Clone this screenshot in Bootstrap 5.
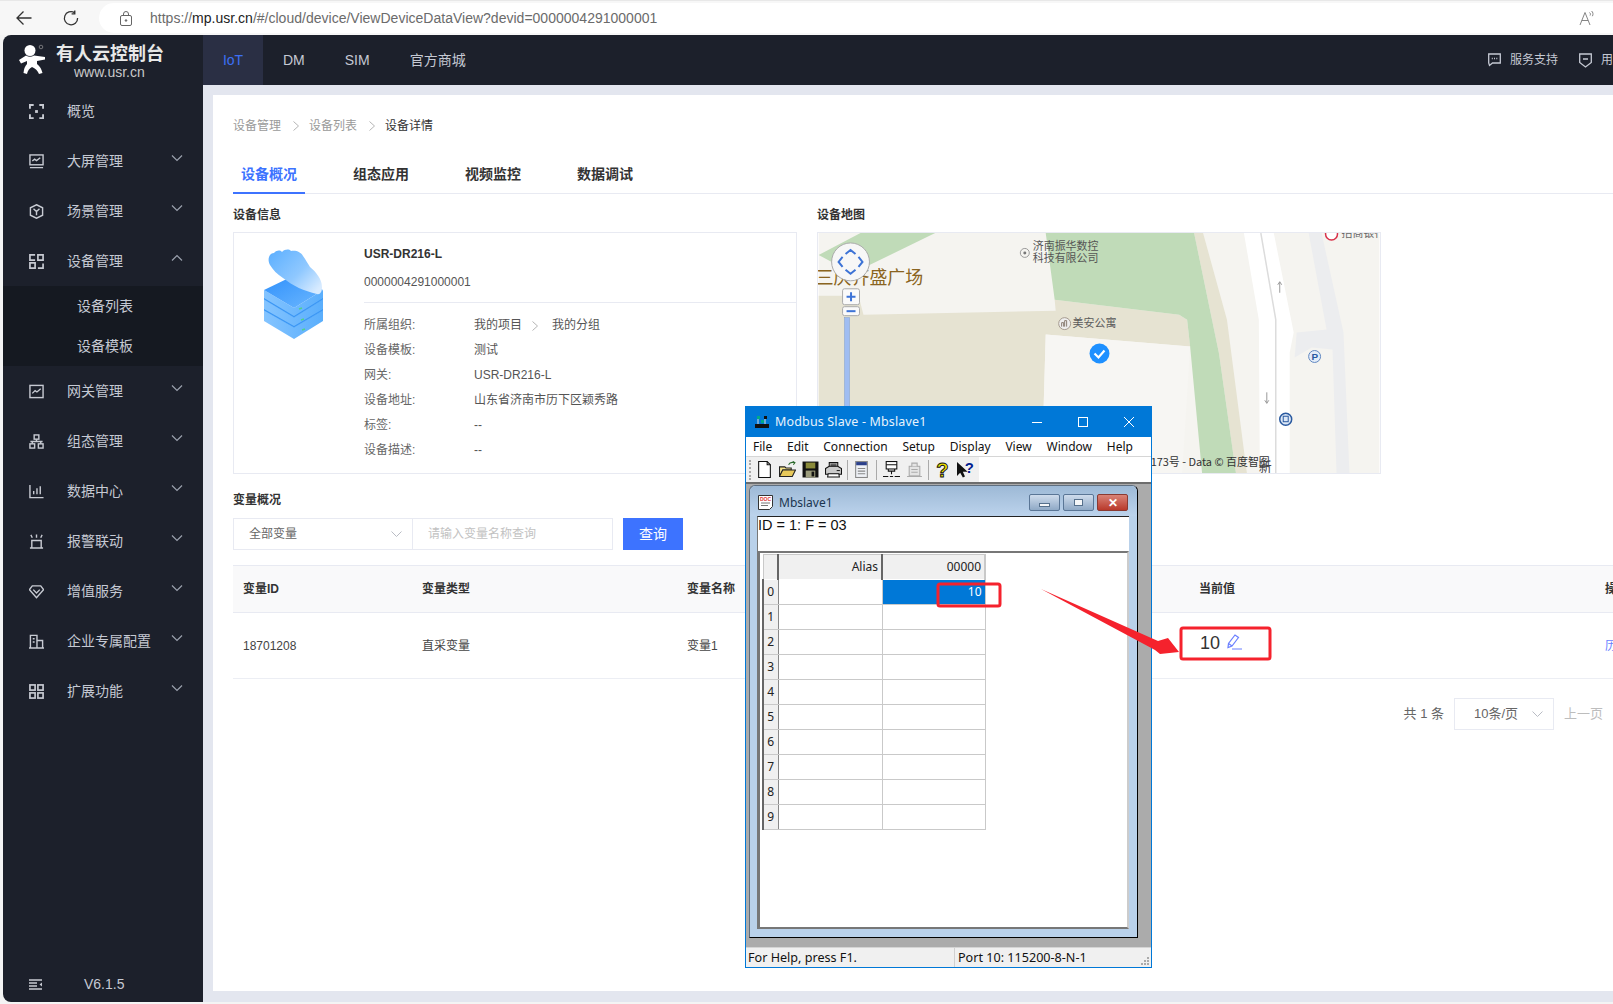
<!DOCTYPE html>
<html lang="zh-CN">
<head>
<meta charset="UTF-8">
<title>有人云控制台</title>
<link href="https://cdn.jsdelivr.net/npm/bootstrap@5.3.0/dist/css/bootstrap.min.css" rel="stylesheet">
<style>
html, body { height: 100%; }
body { width: 1613px; height: 1004px; overflow: hidden; position: relative; background: #f4f4f4; font-family: "Liberation Sans", "Noto Sans CJK SC", sans-serif; font-size: 12px; color: #333; }
/* browser chrome */
.chrome-bar { height: 35px; background: #f7f7f7; border-top: 1px solid #e8e8e8; }
.chrome-btn { width: 16px; height: 16px; color: #333; }
.url-pill { height: 30px; margin-left: 20px; flex: 1; background: #fff; border-radius: 15px 0 0 15px; padding-left: 21px; }
.url-text { font-size: 14px; color: #6b6b6b; margin-left: 18px; letter-spacing: .01px; }
.url-text b { font-weight: 400; color: #222; }
/* app frame */
.app-frame { height: 967px; margin-left: 3px; }
.side-bar { width: 200px; background: #1c202b; color: #c5c9d3; border-radius: 8px 0 0 8px; font-size: 14px; }
.logo-box { height: 51px; padding: 9px 0 0 15px; }
.logo-title { font-size: 18px; font-weight: 700; color: #e8e8e8; line-height: 20px; margin-left: 10px; white-space: nowrap; }
.logo-url { font-size: 14px; color: #c9c9c9; line-height: 14px; padding-left: 28px; margin-top: 1px; }
.side-item { height: 50px; padding-left: 26px; }
.side-item .side-ico { width: 15px; height: 15px; margin-right: 23px; color: #c7cad2; flex: none; }
.side-item .side-arrow { width: 12px; height: 8px; margin-left: auto; margin-right: 20px; margin-bottom: 6px; color: #9aa0ad; }
.side-sub { background: #151921; }
.side-sub div { height: 40px; line-height: 40px; padding-left: 74px; }
.side-foot { height: 36px; padding-left: 26px; margin-top: auto; margin-bottom: 0; }
.top-bar { height: 50px; background: #1c202b; color: #c5c9d3; font-size: 14px; }
.top-link { height: 50px; line-height: 50px; white-space: nowrap; }
.top-iot { width: 60px; text-align: center; background: #2a2f44; color: #3d6ff5; margin-right: 20px; }
.top-help { font-size: 12px; }
.main-bg { background: #e3e6ef; padding: 10px 0 11px 10px; }
.main-panel { background: #fff; height: 100%; padding: 21px 0 0 20px; overflow: hidden; }
.crumbs { height: 20px; color: #9a9a9a; }
.crumbs svg { width: 6px; height: 10px; margin: 0 10px 0 12px; color: #b5b5b5; }
.crumbs span:last-child { color: #333; }
.tab-row { margin-top: 19px; height: 39px; border-bottom: 1px solid #e8eaf2; font-size: 14px; font-weight: 700; }
.tab-link { width: 72px; text-align: center; line-height: 38px; height: 39px; margin-right: 40px; color: #333; }
.tab-on { color: #3d73ff; border-bottom: 2px solid #3d73ff; }
.sec-title { font-weight: 700; height: 20px; line-height: 20px; color: #333; }
.info-col { width: 564px; flex: none; }
.map-col { width: 564px; flex: none; margin-left: 20px; }
.info-card { height: 242px; margin-top: 7px; border: 1px solid #e8eaf2; }
.info-pic { width: 130px; padding: 16px 0 0 30px; flex: none; }
.info-body { flex: 1; padding-top: 11px; }
.info-name { font-weight: 700; height: 20px; line-height: 20px; }
.info-id { height: 20px; line-height: 20px; margin-top: 8px; color: #555; padding-bottom: 0; }
.info-line { border-top: 1px solid #e8eaf2; margin: 10px 0 10px; }
.info-row { height: 25px; line-height: 25px; color: #555; }
.info-row .info-key { width: 110px; color: #666; }
.info-row svg { width: 6px; height: 10px; margin: 0 14px 0 10px; color: #b5b5b5; }
.map-box { width: 564px; height: 242px; margin-top: 7px; border: 1px solid #e8eaf2; display: block; }
.filter-row { margin-top: 8px; height: 32px; }
.sel-box { border: 1px solid #e8eaf2; background: #fff; padding: 0 10px 0 15px; height: 32px; color: #666; }
.sel-box svg { width: 11px; height: 7px; color: #b9bcc4; }
.var-input { width: 201px; height: 32px; font-size: 12px; border-color: #e8eaf2; padding-left: 15px; margin-left: -1px; }
.var-input::placeholder { color: #c2c2c2; }
.query-btn { width: 60px; height: 32px; margin-left: 10px; background: #3d73ff; border-color: #3d73ff; font-size: 14px; padding: 0; }
.var-table { width: 1420px; margin: 15px 0 0; table-layout: fixed; font-size: 12px; }
.var-table th { height: 47px; background: #f9f9fa; border-top: 1px solid #e8eaf2; border-bottom: 1px solid #e8eaf2; vertical-align: middle; padding: 0 0 0 10px; color: #333; }
.var-table td { height: 66px; border-bottom: 1px solid #eceef4; vertical-align: middle; padding: 0 0 0 10px; color: #444; }
.val-big { font-size: 18px; color: #333; position: relative; top: -2px; left: 1px; }
.val-big svg { width: 16px; height: 16px; margin-left: 7px; color: #6a7fff; vertical-align: -1px; }
.hist-link { color: #6a82ff; white-space: nowrap; }
.pager-row { width: 1380px; margin-top: 19px; height: 32px; color: #666; font-size: 13px; }
.pager-sel { width: 100px; margin: 0 10px 0 10px; padding-left: 19px; }
.pager-prev { color: #bdbdbd; padding-right: 10px; }
/* annotation layer */
.note-layer { position: absolute; left: 0; top: 0; width: 1613px; height: 1004px; z-index: 30; pointer-events: none; }
/* Modbus window */
.mb-win { position: absolute; left: 745px; top: 406px; width: 407px; height: 562px; z-index: 20; border: 1px solid #0078d7; background: #ababab; font-family: "Noto Sans", "Open Sans", sans-serif; color: #111; }
.mb-title { height: 30px; background: #0078d7; color: #e8f3fc; font-size: 12.5px; padding-left: 9px; letter-spacing: .15px; }
.mb-title svg.mb-app { width: 14px; height: 14px; margin-right: 6px; }
.mb-sys { width: 12px; height: 12px; color: #fff; margin-left: 34px; }
.mb-menu { height: 19px; background: #fff; font-size: 12px; padding-left: 7px; gap: 14.8px; line-height: 19px; }
.mb-tools { height: 26px; background: #fff; border-top: 1px solid #d6d6d6; }
.mb-toolset { width: 233px; background: #f0f0f0; padding-left: 3px; }
.mb-grip { width: 3px; height: 20px; border-left: 2px dotted #aaa; margin-right: .5px; }
.mb-tool { width: 23px; height: 18px; flex: none; }
.mb-tool svg { width: 17px; height: 17px; display: block; margin: auto; }
.mb-sep { width: 1px; height: 20px; background: #aaa; flex: none; }
.mb-mdi { flex: 1; border-top: 2px solid #6d6d6d; padding: 1px 13px 9px 3px; }
.mb-child { height: 100%; background: #b9d1ea; border-radius: 6px 6px 0 0; border: 1px solid #5f6f80; border-right: 1px solid #000; border-bottom: 1px solid #000; padding: 0 8px 8px 7px; }
.mb-child-title { height: 30px; padding-top: 3px !important; flex: none; font-size: 12px; color: #1a3550; background: linear-gradient(#9db9d6, #bcd3ec); margin: 0 -8px 0 -7px; padding: 0 9px 0 8px; border-radius: 6px 6px 0 0; }
.mb-child-title svg { width: 15px; height: 15px; margin-right: 6px; }
.mb-caps { width: 31px; height: 17px; border: 1px solid #5a7696; border-radius: 2px; margin-left: 3px; background: linear-gradient(#cfdcec, #8fa9c6); }
.mb-caps i { display: block; background: #f4f6f8; border: 1px solid #56708c; }
.mb-close { background: linear-gradient(#d98377, #b9392b); border-color: #8a3a32; color: #fff; font-size: 12px; font-weight: 700; line-height: 15px; text-align: center; }
.mb-client { flex: 1; background: #fff; border-top: 1px solid #222; border-left: 1px solid #777; min-height: 0; }
.mb-idline { height: 34px; flex: none; font-family: "Liberation Sans", sans-serif; font-size: 14.5px; line-height: 16px; color: #111; }
.mb-frame { flex: 1; border: 2px solid #777; border-right-color: #ccc; border-bottom-color: #777; padding: 1px 0 0 2px; }
.mb-grid { table-layout: fixed; border-collapse: collapse; width: 222px; font-size: 12px; font-family: "Noto Sans", sans-serif; }
.mb-grid th, .mb-grid td { border: 1px solid #c9c9c9; padding: 0 3px; height: 25px; line-height: 20px; font-weight: 400; text-align: right; color: #222; }
.mb-grid thead th { background: #f0f0f0; height: 25px; border-right: 2px solid #666; border-bottom-color: #fff; }
.mb-grid tbody th { background: #f0f0f0; text-align: center; padding: 0; border-right: 1px solid #888; border-left: 2px solid #666; }
.mb-sel { background: #0078d7 !important; color: #fff !important; }
.mb-status { height: 20px; background: #f0f0f0; border-top: 1px solid #d4d4d4; font-size: 12.6px; line-height: 20px; color: #111; padding-left: 2px; }
.mb-status .mb-left { width: 207px; border-right: 1px solid #d0d0d0; margin-right: 3px; }
.mb-resize { width: 10px; height: 10px; margin-left: auto; margin-top: 8px; margin-right: 1px; }
</style>
</head>
<body>

<!-- browser bar -->
<div class="chrome-bar d-flex align-items-center">
    <svg class="chrome-btn ms-3" viewBox="0 0 16 16" fill="none" stroke="currentColor" stroke-width="1.3"><path d="M15.5 8H1M7.5 1.5 1 8l6.5 6.5"/></svg>
    <svg class="chrome-btn" style="margin-left:31px" viewBox="0 0 16 16" fill="none" stroke="currentColor" stroke-width="1.3"><path d="M11.5 2.6A6.6 6.6 0 1 0 14.6 8M11.8.6v3.2H8.6"/></svg>
    <div class="url-pill d-flex align-items-center">
        <svg width="12" height="15" viewBox="0 0 12 15" fill="none" stroke="#666" stroke-width="1"><rect x=".5" y="4.5" width="11" height="10" rx="1.5"/><path d="M3.5 4.5V3a2.5 2.5 0 0 1 5 0v1.5"/><circle cx="6" cy="9.5" r=".8" fill="#666"/></svg>
        <span class="url-text">https://<b>mp.usr.cn</b>/#/cloud/device/ViewDeviceDataView?devid=0000004291000001</span>
        <svg class="ms-auto" style="margin-right:18px" width="16" height="16" viewBox="0 0 16 16" fill="none" stroke="#777" stroke-width=".9"><path d="M1 15 6 2.5 11 15M2.8 10.5h6.4M10.5 2.5c1 .6 1.2 2 .6 3M12.5 1c1.6 1 1.9 3.500 .9 5.200"/></svg>
    </div>
</div>

<div class="app-frame d-flex">
    <!-- sidebar -->
    <nav class="side-bar d-flex flex-column flex-shrink-0">
        <div class="logo-box d-flex">
            <svg width="28" height="31" viewBox="0 0 28 31" fill="#fff"><circle cx="12" cy="6.500" r="5.500"/><circle cx="23" cy="3" r="1.800" fill="none" stroke="#999" stroke-width=".7"/><path d="M1 16 8 11.500Q12 14 16 11.500L27 13v2.500L19 17v3q4 3 5.500 9L21 30q-2-5-7-7-4 2-5 7l-3.500-1q.5-6 3.500-9v-3l-6 2.500z"/></svg>
            <div>
                <div class="logo-title">有人云控制台</div>
                <div class="logo-url">www.usr.cn</div>
            </div>
        </div>
        <div class="side-item d-flex align-items-center">
            <svg class="side-ico" viewBox="0 0 16 16" fill="none" stroke="currentColor" stroke-width="2"><path d="M1 5V1h4M11 1h4v4M15 11v4h-4M5 15H1v-4"/><rect x="6.500" y="6.500" width="3" height="3" fill="currentColor" stroke="none"/></svg>
            概览
        </div>
        <div class="side-item d-flex align-items-center">
            <svg class="side-ico" viewBox="0 0 16 16" fill="none" stroke="currentColor" stroke-width="1.500"><rect x="1" y="1" width="14" height="10.500"/><path d="M3.500 7.500 6 5.500l2 1.500 4-3M1 14.500h14"/></svg>
            大屏管理
            <svg class="side-arrow" viewBox="0 0 12 8" fill="none" stroke="currentColor" stroke-width="1.200"><path d="m1 1.500 5 5 5-5"/></svg>
        </div>
        <div class="side-item d-flex align-items-center">
            <svg class="side-ico" viewBox="0 0 16 16" fill="none" stroke="currentColor" stroke-width="1.500"><path d="M8 .8 14.500 4v8L8 15.200 1.500 12V4zM4.800 5 8 8l3.200-3M8 8v4"/></svg>
            场景管理
            <svg class="side-arrow" viewBox="0 0 12 8" fill="none" stroke="currentColor" stroke-width="1.200"><path d="m1 1.500 5 5 5-5"/></svg>
        </div>
        <div class="side-item d-flex align-items-center">
            <svg class="side-ico" viewBox="0 0 16 16" fill="none" stroke="currentColor" stroke-width="1.800"><path d="M6.500 6.500H1V1h5.500M9.500 1H15v5.500H9.500zM1 9.500h5.500V15H1zM15 10v5H9.500"/></svg>
            设备管理
            <svg class="side-arrow" viewBox="0 0 12 8" fill="none" stroke="currentColor" stroke-width="1.200"><path d="m1 6.500 5-5 5 5"/></svg>
        </div>
        <div class="side-sub">
            <div>设备列表</div>
            <div>设备模板</div>
        </div>
        <div class="side-item d-flex align-items-center">
            <svg class="side-ico" viewBox="0 0 16 16" fill="none" stroke="currentColor" stroke-width="1.500"><rect x="1" y="1.500" width="14" height="13"/><path d="M3.500 10 6.500 7l2 1.500 4-3.500"/></svg>
            网关管理
            <svg class="side-arrow" viewBox="0 0 12 8" fill="none" stroke="currentColor" stroke-width="1.200"><path d="m1 1.500 5 5 5-5"/></svg>
        </div>
        <div class="side-item d-flex align-items-center">
            <svg class="side-ico" viewBox="0 0 16 16" fill="none" stroke="currentColor" stroke-width="1.500"><rect x="5.500" y="1" width="5" height="4.500"/><rect x="1" y="10.500" width="5" height="4.500"/><rect x="10" y="10.500" width="5" height="4.500"/><path d="M8 5.500V8M1.500 8h13M3.500 8v2.500M12.500 8v2.500"/></svg>
            组态管理
            <svg class="side-arrow" viewBox="0 0 12 8" fill="none" stroke="currentColor" stroke-width="1.200"><path d="m1 1.500 5 5 5-5"/></svg>
        </div>
        <div class="side-item d-flex align-items-center">
            <svg class="side-ico" viewBox="0 0 16 16" fill="none" stroke="currentColor" stroke-width="1.500"><path d="M1 1v13.500h14.500M5 11V7.500M8.500 11V4.500M12 11V2.500"/></svg>
            数据中心
            <svg class="side-arrow" viewBox="0 0 12 8" fill="none" stroke="currentColor" stroke-width="1.200"><path d="m1 1.500 5 5 5-5"/></svg>
        </div>
        <div class="side-item d-flex align-items-center">
            <svg class="side-ico" viewBox="0 0 16 16" fill="none" stroke="currentColor" stroke-width="1.500"><path d="M1 15h14M3 15V7h10v8M2 1l1.500 3M8 .5V4M14 1l-1.500 3"/></svg>
            报警联动
            <svg class="side-arrow" viewBox="0 0 12 8" fill="none" stroke="currentColor" stroke-width="1.200"><path d="m1 1.500 5 5 5-5"/></svg>
        </div>
        <div class="side-item d-flex align-items-center">
            <svg class="side-ico" viewBox="0 0 16 16" fill="none" stroke="currentColor" stroke-width="1.500"><path d="M3.500 2h9L15.500 6 8 14.500.5 6zM4.500 6 8 9.500 11.500 6"/></svg>
            增值服务
            <svg class="side-arrow" viewBox="0 0 12 8" fill="none" stroke="currentColor" stroke-width="1.200"><path d="m1 1.500 5 5 5-5"/></svg>
        </div>
        <div class="side-item d-flex align-items-center">
            <svg class="side-ico" viewBox="0 0 16 16" fill="none" stroke="currentColor" stroke-width="1.500"><path d="M0 15h16M1.500 15V1.500h7V15M8.500 7h6V15M4 5h2M4 8.500h2"/></svg>
            企业专属配置
            <svg class="side-arrow" viewBox="0 0 12 8" fill="none" stroke="currentColor" stroke-width="1.200"><path d="m1 1.500 5 5 5-5"/></svg>
        </div>
        <div class="side-item d-flex align-items-center">
            <svg class="side-ico" viewBox="0 0 16 16" fill="none" stroke="currentColor" stroke-width="1.800"><rect x="1" y="1" width="5.500" height="5.500"/><rect x="9.500" y="1" width="5.500" height="5.500"/><rect x="1" y="9.500" width="5.500" height="5.500"/><rect x="9.500" y="9.500" width="5.500" height="5.500"/></svg>
            扩展功能
            <svg class="side-arrow" viewBox="0 0 12 8" fill="none" stroke="currentColor" stroke-width="1.200"><path d="m1 1.500 5 5 5-5"/></svg>
        </div>
        <div class="side-foot d-flex align-items-center">
            <svg width="13" height="11" viewBox="0 0 13 11" fill="none" stroke="#c7cad2" stroke-width="1.400"><path d="M0 1h13M0 4h8M0 7h8M0 10h13"/><path d="M13 3.500 10.500 5.500 13 7.500z" fill="#c7cad2" stroke="none"/></svg>
            <span style="margin-left:42px">V6.1.5</span>
        </div>
    </nav>

    <div class="d-flex flex-column flex-grow-1" style="min-width:0">
        <!-- top bar -->
        <header class="top-bar d-flex align-items-center">
            <div class="top-link top-iot">IoT</div>
            <div class="top-link" style="margin-right:40px">DM</div>
            <div class="top-link" style="margin-right:40px">SIM</div>
            <div class="top-link">官方商城</div>
            <div class="top-help d-flex align-items-center ms-auto">
                <svg width="13" height="14" viewBox="0 0 13 14" fill="none" stroke="#c5c9d3" stroke-width="1.300"><path d="M.7 1h11.600v9H4.500L1.500 12.500 .7 10z"/><path d="M3.800 5.500h1M6 5.500h1M8.300 5.500h1"/></svg>
                <span style="margin-left:9px;margin-right:21px">服务支持</span>
                <svg width="13" height="15" viewBox="0 0 13 15" fill="none" stroke="#c5c9d3" stroke-width="1.300"><path d="M.7 1h11.600v8.500L6.500 14 .7 9.500zM4 6h5"/></svg>
                <span style="margin-left:9px;width:12px;overflow:hidden;white-space:nowrap">用户中心</span>
            </div>
        </header>

        <main class="main-bg flex-grow-1" style="min-height:0">
            <div class="main-panel">
                <div class="crumbs d-flex align-items-center">
                    <span>设备管理</span>
                    <svg viewBox="0 0 6 10" fill="none" stroke="currentColor"><path d="m.5.5 5 4.500-5 4.500"/></svg>
                    <span>设备列表</span>
                    <svg viewBox="0 0 6 10" fill="none" stroke="currentColor"><path d="m.5.5 5 4.500-5 4.500"/></svg>
                    <span>设备详情</span>
                </div>

                <div class="tab-row d-flex">
                    <div class="tab-link tab-on">设备概况</div>
                    <div class="tab-link">组态应用</div>
                    <div class="tab-link">视频监控</div>
                    <div class="tab-link">数据调试</div>
                </div>

                <div class="d-flex" style="margin-top:11px">
                    <section class="info-col">
                        <div class="sec-title">设备信息</div>
                        <div class="info-card d-flex">
                            <div class="info-pic">
                                <svg width="60" height="91" viewBox="0 0 60 91">
                                    <defs>
                                        <linearGradient id="cloudFill" x1="0" y1="0" x2="1" y2=".8"><stop offset="0" stop-color="#5aaeff"/><stop offset=".6" stop-color="#8fc8ff"/><stop offset="1" stop-color="#d8ebff"/></linearGradient>
                                        <linearGradient id="slabSide" x1="0" y1="0" x2="1" y2="0"><stop offset="0" stop-color="#84c4ff"/><stop offset="1" stop-color="#5aaefc"/></linearGradient>
                                        <linearGradient id="slabTop" x1="0" y1="0" x2="1" y2="1"><stop offset="0" stop-color="#2f90fb"/><stop offset="1" stop-color="#6db8ff"/></linearGradient>
                                    </defs>
                                    <path d="M0 61 30 78 59 61v11L30 90 0 72z" fill="url(#slabSide)"/>
                                    <path d="M0 59 30 76 59 59v2.500L30 78.500 0 61.500z" fill="#3b97f5"/>
                                    <path d="M0 50 30 68 59 50v10L30 77 0 60z" fill="url(#slabSide)"/>
                                    <path d="M0 48 30 66 59 48v2.500L30 68.500 0 50.500z" fill="#3b97f5"/>
                                    <path d="M0 41 30 59 59 41v8L30 67 0 49z" fill="url(#slabSide)"/>
                                    <path d="M0 41 29 27 59 41 30 59z" fill="url(#slabTop)"/>
                                    <path d="M6 16C3 11 5 4 10 4c3-3 6-3 8-1 3-3 7-3 9-1 5-1 10 1 12 5 3 4 5 8 7 11 6 5 12 12 12 20 0 5-2 8-5 7C40 42 29 37 19 29 13 25 9 21 6 16z" fill="url(#cloudFill)"/>
                                    <path d="M35 60l3-1M37 71l3-1M38 81l3-1" stroke="#4fd08f" stroke-width="1.500"/>
                                </svg>
                            </div>
                            <div class="info-body">
                                <div class="info-name">USR-DR216-L</div>
                                <div class="info-id">0000004291000001</div>
                                <div class="info-line"></div>
                                <div class="info-row d-flex align-items-center"><span class="info-key">所属组织:</span><span>我的项目</span><svg viewBox="0 0 6 10" fill="none" stroke="currentColor"><path d="m.5.5 5 4.500-5 4.500"/></svg><span>我的分组</span></div>
                                <div class="info-row d-flex"><span class="info-key">设备模板:</span><span>测试</span></div>
                                <div class="info-row d-flex"><span class="info-key">网关:</span><span>USR-DR216-L</span></div>
                                <div class="info-row d-flex"><span class="info-key">设备地址:</span><span>山东省济南市历下区颖秀路</span></div>
                                <div class="info-row d-flex"><span class="info-key">标签:</span><span>--</span></div>
                                <div class="info-row d-flex"><span class="info-key">设备描述:</span><span>--</span></div>
                            </div>
                        </div>
                    </section>
                    <section class="map-col">
                        <div class="sec-title">设备地图</div>
                        <svg class="map-box" viewBox="0 0 563 241" font-family="'Noto Sans CJK SC',sans-serif">
                            <rect width="563" height="241" fill="#f5f4f0"/>
                            <polygon points="0,63 40,63 45,82 238,78 237,67 362,82 370,87 373,114 228,102 224,241 0,241" fill="#e6e3d2"/>
                            <polygon points="0,22 42,0 117,0 33,41 15,30" fill="#c0dbb8"/>
                            <polygon points="377,0 386,0 410,87 430,241 419,241 402,121" fill="#e6e3d2"/>
                            <polygon points="228,0 377,0 402,121 419,241 385,241 373,114 370,87 362,82 237,67" fill="#c0dbb8"/>
                            <polygon points="228,102 373,114 365,241 224,241" fill="#f7f6f3"/>
                            <polygon points="427,0 457,0 477,100 473,120 473,241 443,241 442,87" fill="#fff"/>
                            <path d="M444 0 459 87V241" stroke="#dcdcdc" stroke-width="1.500" fill="none"/>
                            <polygon points="492,0 505,0 527,100 533,241 520,241 516,117 495,115 478,125 480,100 510,97" fill="#ecedef"/>
                            <text x="-3" y="51" font-size="18" fill="#8a6420">三庆齐盛广场</text>
                            <circle cx="207" cy="20" r="4.500" fill="#f5f4f0" stroke="#999"/><circle cx="207" cy="20" r="1.500" fill="#777"/>
                            <text x="215" y="17" font-size="11" fill="#555">济南振华数控</text>
                            <text x="215" y="29" font-size="11" fill="#555">科技有限公司</text>
                            <circle cx="247" cy="91" r="6" fill="#eee" stroke="#a59a90"/><path d="M244 94v-4h2v4M247 94v-6h2v6" stroke="#8a7d72" fill="none"/>
                            <text x="255" y="94" font-size="11" fill="#5a5a5a">美安公寓</text>
                            <circle cx="282" cy="121" r="10" fill="#1e90ff"/><path d="m277 121 4 4 6-7" stroke="#fff" stroke-width="2.200" fill="none"/>
                            <circle cx="498" cy="124" r="6" fill="#e3ecf8" stroke="#5f86c0"/><text x="495" y="128" font-size="10" font-weight="700" font-family="'Liberation Sans',sans-serif" fill="#2a5aa0">P</text>
                            <circle cx="469" cy="187" r="6" fill="#dde8f6" stroke="#2a5aa0" stroke-width="1.500"/><rect x="466.500" y="184" width="5" height="5.500" fill="none" stroke="#2a5aa0"/>
                            <path d="M463 60V49M461 52l2-3 2 3" stroke="#999" fill="none"/>
                            <path d="M450 160v11M448 168l2 3 2-3" stroke="#999" fill="none"/>
                            <circle cx="515" cy="1" r="6" fill="#fff" stroke="#d9324a" stroke-width="1.500"/>
                            <text x="525" y="4" font-size="11" fill="#666">招商银行</text>
                            <text x="453" y="234" text-anchor="end" font-size="11" fill="#333">173号 - Data © 百度智图</text>
                            <text x="442" y="239" font-size="13" fill="#444">新</text>
                            <rect x="26" y="85" width="5" height="156" fill="#9fbdf2" stroke="#7d9ccc" stroke-width=".5"/>
                            <circle cx="32" cy="29" r="19" fill="#f7f7f7" stroke="#aaa"/>
                            <path d="M27 21l5-4 5 4M27 37l5 4 5-4M24 24l-4 5 4 5M40 24l4 5-4 5" stroke="#3d73d6" stroke-width="2" fill="none"/>
                            <rect x="24" y="56" width="17" height="16" rx="2" fill="#fafafa" stroke="#aaa"/>
                            <path d="M32.500 59.500v9M28 64h9" stroke="#3d73d6" stroke-width="2"/>
                            <rect x="24" y="74" width="17" height="9" rx="2" fill="#fafafa" stroke="#aaa"/>
                            <path d="M28 78.500h9" stroke="#3d73d6" stroke-width="2"/>
                        </svg>
                    </section>
                </div>

                <div class="sec-title" style="margin-top:16px">变量概况</div>
                <div class="filter-row d-flex">
                    <div class="sel-box d-flex align-items-center justify-content-between" style="width:180px">
                        全部变量
                        <svg viewBox="0 0 11 7" fill="none" stroke="currentColor"><path d="m.5.500 5 5 5-5"/></svg>
                    </div>
                    <input class="form-control rounded-0 var-input" placeholder="请输入变量名称查询">
                    <button class="btn btn-primary rounded-0 query-btn">查询</button>
                </div>

                <table class="var-table">
                    <colgroup><col style="width:179px"><col style="width:265px"><col style="width:512px"><col style="width:406px"><col></colgroup>
                    <thead>
                        <tr><th>变量ID</th><th>变量类型</th><th>变量名称</th><th>当前值</th><th>操作</th></tr>
                    </thead>
                    <tbody>
                        <tr>
                            <td>18701208</td>
                            <td>直采变量</td>
                            <td>变量1</td>
                            <td><span class="val-big">10<svg viewBox="0 0 16 16" fill="none" stroke="currentColor" stroke-width="1.200"><path d="M1 13.500 1.500 9.500 8 1l3.500 2.500L5 12zM1.500 9.500 5 12M5 15h10"/></svg></span></td>
                            <td><span class="hist-link">历史</span></td>
                        </tr>
                    </tbody>
                </table>

                <div class="pager-row d-flex align-items-center justify-content-end">
                    <span>共 1 条</span>
                    <div class="sel-box pager-sel d-flex align-items-center justify-content-between">10条/页<svg viewBox="0 0 11 7" fill="none" stroke="currentColor"><path d="m.5.500 5 5 5-5"/></svg></div>
                    <span class="pager-prev">上一页</span>
                </div>
            </div>
        </main>
    </div>
</div>

<!-- Modbus Slave window pasted over the page -->
<div class="mb-win d-flex flex-column">
    <div class="mb-title d-flex align-items-center flex-shrink-0">
        <svg class="mb-app" viewBox="0 0 14 14"><rect x="0" y="9" width="14" height="4" fill="#111"/><rect x="2" y="1" width="3" height="3" fill="#0a8"/><rect x="9" y="1" width="3" height="3" fill="#111"/><rect x="6" y="5" width="3" height="3" fill="#0a8"/><path d="M3 4v5M10 4v5" stroke="#ddd"/></svg>
        <span>Modbus Slave - Mbslave1</span>
        <span class="ms-auto d-flex align-items-center" style="margin-right:16px">
            <svg class="mb-sys" viewBox="0 0 12 12" stroke="currentColor" fill="none"><path d="M1 6.500h10"/></svg>
            <svg class="mb-sys" viewBox="0 0 12 12" stroke="currentColor" fill="none"><rect x="1.500" y="1.500" width="9" height="9"/></svg>
            <svg class="mb-sys" viewBox="0 0 12 12" stroke="currentColor" fill="none"><path d="m1 1 10 10M11 1 1 11"/></svg>
        </span>
    </div>
    <div class="mb-menu d-flex flex-shrink-0"><span>File</span><span>Edit</span><span>Connection</span><span>Setup</span><span>Display</span><span>View</span><span>Window</span><span>Help</span></div>
    <div class="mb-tools d-flex flex-shrink-0">
        <div class="mb-toolset d-flex align-items-center">
            <span class="mb-grip"></span>
            <span class="mb-tool"><svg viewBox="0 0 16 16" fill="#fff" stroke="#111"><path d="M2.500.5h8l3 3v12h-11z"/><path d="M10.500.5v3h3" fill="none"/></svg></span>
            <span class="mb-tool"><svg viewBox="0 0 16 16" stroke="#222"><path d="M.5 14.500v-9h5l1 1h5v2h-8z" fill="#f5e38a"/><path d="M.5 14.500l3-6h12l-3 6z" fill="#e8c95a"/><path d="M9 3.500c1-2 3-2.500 5-2M13 .5l2 1-1.500 2" fill="none" stroke="#2c6a2c"/></svg></span>
            <span class="mb-tool"><svg viewBox="0 0 16 16"><rect x=".5" y=".5" width="15" height="15" fill="#111"/><rect x="3.500" y="1.500" width="9" height="5.500" fill="#8a8a3a"/><rect x="3.500" y="9" width="9" height="6.500" fill="#9c9c7c"/><rect x="9" y="10" width="2.500" height="4.500" fill="#111"/></svg></span>
            <span class="mb-tool"><svg viewBox="0 0 16 16" stroke="#111" fill="#fff"><path d="M4 1.500h8v5H4z"/><path d="M.5 7 4 5h8l3.500 2v5.500H.5z" fill="#ccc"/><path d="M3 12h10l.5 3h-11z"/><path d="M5 3h6M5 4.500h6M11 9h3" stroke-width=".9"/></svg></span>
            <span class="mb-sep" style="margin-left:2.500px"></span>
            <span class="mb-tool" style="width:26px"><svg viewBox="0 0 16 16" stroke="#888" fill="#eef1f6"><rect x="2.500" y=".5" width="11" height="15"/><rect x="3" y="1" width="10" height="3" fill="#2a3f8a" stroke="none"/><path d="M4.500 7h7M4.500 9.500h7M4.500 12h7"/></svg></span>
            <span class="mb-sep" style="margin-left:2px"></span>
            <span class="mb-tool" style="margin-left:3px"><svg viewBox="0 0 16 16" stroke="#111" fill="#fff"><rect x="3" y=".5" width="10" height="7"/><path d="M3 3.500h10M5 7.500v2h6v-2M8 9.500v3M0 14.500h5M6.500 14.500h3M11 14.500h5" fill="none"/></svg></span>
            <span class="mb-tool"><svg viewBox="0 0 16 16" stroke="#aaa" fill="#e4e4e4"><rect x="3" y="5" width="10" height="9"/><path d="M5.500 5V2h5v3M5 8h6M5 10.500h6M1 14.500h14"/></svg></span>
            <span class="mb-sep" style="margin-left:2px"></span>
            <span class="mb-tool" style="margin-left:1.500px"><svg viewBox="0 0 16 16"><text x="8" y="15" text-anchor="middle" font-size="19" font-weight="700" fill="#f1e300" stroke="#111" stroke-width=".9" font-family="'Liberation Sans',sans-serif">?</text></svg></span>
            <span class="mb-tool"><svg viewBox="0 0 16 16"><path d="M0 1v13l3-3 2.500 4.500 2-1L5.500 10H10z" fill="#111"/><text x="11.500" y="11" text-anchor="middle" font-size="14" font-weight="700" fill="#00208f" font-family="'Liberation Sans',sans-serif">?</text></svg></span>
        </div>
    </div>
    <div class="mb-mdi d-flex flex-column" style="min-height:0">
        <div class="mb-child d-flex flex-column">
            <div class="mb-child-title d-flex align-items-center">
                <svg viewBox="0 0 15 15"><path d="M.5.500h14v11l-3 3H.5z" fill="#fff" stroke="#333"/><text x="7.500" y="5.500" text-anchor="middle" font-size="5" font-weight="700" fill="#d33" font-family="'Liberation Sans',sans-serif">DOC</text><path d="M3 8h9M3 10.500h7" stroke="#777"/></svg>
                <span>Mbslave1</span>
                <span class="ms-auto d-flex">
                    <span class="mb-caps d-flex align-items-center justify-content-center"><i style="width:11px;height:4px;margin-top:5px"></i></span>
                    <span class="mb-caps d-flex align-items-center justify-content-center"><i style="width:9px;height:7px"></i></span>
                    <span class="mb-caps mb-close">✕</span>
                </span>
            </div>
            <div class="mb-client d-flex flex-column">
                <div class="mb-idline">ID = 1: F = 03</div>
                <div class="mb-frame">
                    <table class="mb-grid">
                        <colgroup><col style="width:15px"><col style="width:104px"><col style="width:103px"></colgroup>
                        <thead><tr><th></th><th>Alias</th><th style="border-right-color:#c9c9c9">00000</th></tr></thead>
                        <tbody>
                            <tr><th>0</th><td></td><td class="mb-sel">10</td></tr>
                            <tr><th>1</th><td></td><td></td></tr>
                            <tr><th>2</th><td></td><td></td></tr>
                            <tr><th>3</th><td></td><td></td></tr>
                            <tr><th>4</th><td></td><td></td></tr>
                            <tr><th>5</th><td></td><td></td></tr>
                            <tr><th>6</th><td></td><td></td></tr>
                            <tr><th>7</th><td></td><td></td></tr>
                            <tr><th>8</th><td></td><td></td></tr>
                            <tr><th>9</th><td></td><td></td></tr>
                        </tbody>
                    </table>
                </div>
            </div>
        </div>
    </div>
    <div class="mb-status d-flex flex-shrink-0">
        <span class="mb-left">For Help, press F1.</span>
        <span>Port 10: 115200-8-N-1</span>
        <svg class="mb-resize" viewBox="0 0 10 10" fill="#aaa"><rect x="7" y="1" width="2" height="2"/><rect x="4" y="4" width="2" height="2"/><rect x="7" y="4" width="2" height="2"/><rect x="1" y="7" width="2" height="2"/><rect x="4" y="7" width="2" height="2"/><rect x="7" y="7" width="2" height="2"/></svg>
    </div>
</div>

<!-- red annotations -->
<svg class="note-layer" viewBox="0 0 1613 1004">
    <rect x="938" y="584" width="62" height="22" rx="2" fill="none" stroke="#f5222d" stroke-width="3"/>
    <rect x="1181" y="628" width="89" height="31" rx="2" fill="none" stroke="#f5222d" stroke-width="3"/>
    <polygon points="1041,589 1158,641 1168,638 1179,652 1160,654 1155,650" fill="#f5222d"/>
</svg>

<script src="https://cdn.jsdelivr.net/npm/bootstrap@5.3.0/dist/js/bootstrap.bundle.min.js"></script>
</body>
</html>
